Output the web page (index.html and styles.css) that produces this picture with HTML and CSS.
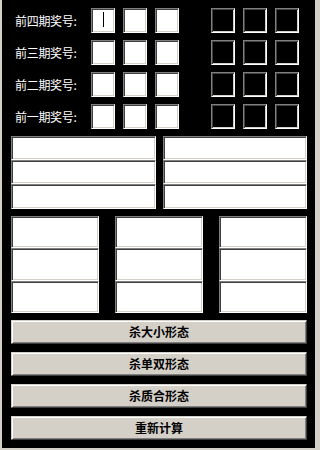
FILE: index.html
```html
<!DOCTYPE html>
<html>
<head>
<meta charset="utf-8">
<link rel="stylesheet" href="styles.css">
</head>
<body>
<div class="panel">
  <div class="rows">
    <div class="row">
      <div class="label">前四期奖号:</div>
      <div class="group">
        <div class="box white"><span class="caret"></span></div>
        <div class="box white"></div>
        <div class="box white"></div>
      </div>
      <div class="group dark-group">
        <div class="box dark"></div>
        <div class="box dark"></div>
        <div class="box dark"></div>
      </div>
    </div>
    <div class="row">
      <div class="label">前三期奖号:</div>
      <div class="group">
        <div class="box white"></div>
        <div class="box white"></div>
        <div class="box white"></div>
      </div>
      <div class="group dark-group">
        <div class="box dark"></div>
        <div class="box dark"></div>
        <div class="box dark"></div>
      </div>
    </div>
    <div class="row">
      <div class="label">前二期奖号:</div>
      <div class="group">
        <div class="box white"></div>
        <div class="box white"></div>
        <div class="box white"></div>
      </div>
      <div class="group dark-group">
        <div class="box dark"></div>
        <div class="box dark"></div>
        <div class="box dark"></div>
      </div>
    </div>
    <div class="row">
      <div class="label">前一期奖号:</div>
      <div class="group">
        <div class="box white"></div>
        <div class="box white"></div>
        <div class="box white"></div>
      </div>
      <div class="group dark-group">
        <div class="box dark"></div>
        <div class="box dark"></div>
        <div class="box dark"></div>
      </div>
    </div>
  </div>

  <div class="lower">
    <div class="two-col">
      <div class="stack">
        <div class="field f24"></div>
        <div class="field f24"></div>
        <div class="field f25"></div>
      </div>
      <div class="stack">
        <div class="field f24"></div>
        <div class="field f24"></div>
        <div class="field f25"></div>
      </div>
    </div>

    <div class="three-col">
      <div class="stack">
        <div class="field f32"></div>
        <div class="field f33"></div>
        <div class="field f32"></div>
      </div>
      <div class="stack">
        <div class="field f32"></div>
        <div class="field f33"></div>
        <div class="field f32"></div>
      </div>
      <div class="stack">
        <div class="field f32"></div>
        <div class="field f33"></div>
        <div class="field f32"></div>
      </div>
    </div>

    <div class="buttons">
      <div class="btn">杀大小形态</div>
      <div class="btn">杀单双形态</div>
      <div class="btn">杀质合形态</div>
      <div class="btn">重新计算</div>
    </div>
  </div>
</div>
</body>
</html>
```

FILE: styles.css
```css
html, body {
  margin: 0;
  padding: 0;
  background: #d4d0c8;
}

body {
  font-family: "Noto Sans CJK SC", "Noto Sans", sans-serif;
  font-size: 12px;
  width: 317px;
  height: 450px;
  overflow: hidden;
}

.panel {
  margin-left: 2px;
  width: 313px;
  height: 448px;
  background: #000;
  box-sizing: border-box;
  padding-top: 8px;
}

.rows {
  display: flex;
  flex-direction: column;
  gap: 7px;
  padding-left: 13px;
}

.row {
  display: flex;
  align-items: center;
  height: 25px;
}

.label {
  width: 76px;
  color: #fff;
  font-size: 12px;
  line-height: 25px;
  white-space: nowrap;
  letter-spacing: -0.3px;
}

.group {
  display: flex;
  gap: 8px;
}

.dark-group {
  margin-left: 32px;
}

.box {
  width: 24px;
  height: 25px;
  box-sizing: border-box;
  border: 1px solid;
  border-color: #808080 #ffffff #ffffff #808080;
  box-shadow: inset 1px 1px 0 #404040, inset -1px -1px 0 #d4d0c8;
}

.white {
  background: #fff;
  display: flex;
  justify-content: center;
  align-items: flex-start;
  padding-top: 3px;
}

.dark {
  background: #000;
}

.caret {
  width: 1px;
  height: 15px;
  background: #000;
}

.lower {
  padding: 7px 8px 0 9px;
  display: flex;
  flex-direction: column;
  gap: 7px;
}

.two-col {
  display: grid;
  grid-template-columns: 145px 144px;
  column-gap: 7px;
}

.three-col {
  display: grid;
  grid-template-columns: 88px 88px 88px;
  column-gap: 16px;
}

.stack {
  display: flex;
  flex-direction: column;
}

.field {
  background: #fff;
  box-sizing: border-box;
  border: 1px solid;
  border-color: #808080 #ffffff #ffffff #808080;
  box-shadow: inset 1px 1px 0 #404040, inset -1px -1px 0 #d4d0c8;
}

.f24 { height: 24px; }
.f25 { height: 25px; }
.f32 { height: 32px; }
.f33 { height: 33px; }

.buttons {
  display: flex;
  flex-direction: column;
  gap: 8px;
}

.btn {
  height: 24px;
  box-sizing: border-box;
  background: #d4d0c8;
  border: 1px solid;
  border-color: #d4d0c8 #404040 #404040 #d4d0c8;
  box-shadow: inset 1px 1px 0 #ffffff, inset -1px -1px 0 #808080;
  color: #000;
  font-weight: bold;
  font-size: 12px;
  text-align: center;
  line-height: 22px;
}
```
